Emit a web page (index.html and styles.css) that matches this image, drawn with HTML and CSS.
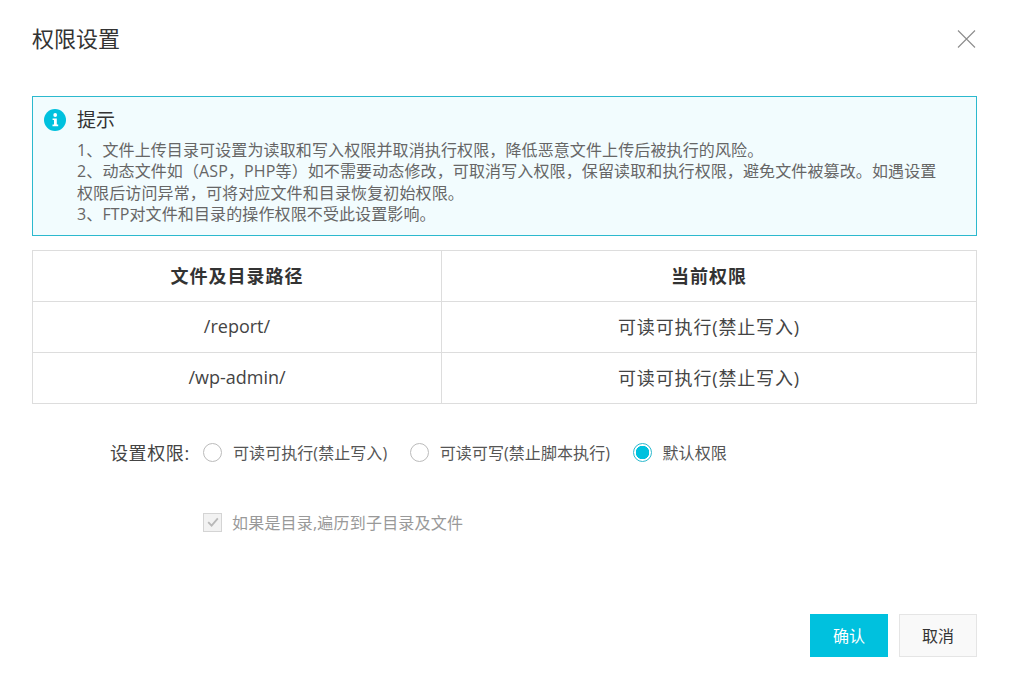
FILE: index.html
```html
<!DOCTYPE html>
<html lang="zh-CN">
<head>
<meta charset="utf-8">
<title>权限设置</title>
<link rel="stylesheet" href="styles.css">
</head>
<body>
<div class="dialog">
  <header class="dialog-head">
    <h1 class="dialog-title">权限设置</h1>
    <svg class="close-icon" width="20" height="20" viewBox="0 0 20 20"><path d="M1 1.5 18 18.5M18 1.5 1 18.5" fill="none" stroke="#8c8c8c" stroke-width="1.1"/></svg>
  </header>
  <section class="alert">
    <div class="alert-head">
      <svg class="info-icon" width="22" height="22" viewBox="0 0 22 22"><circle cx="11" cy="11" r="11" fill="#00c1de"/><circle cx="11.2" cy="6" r="1.9" fill="#fff"/><path d="M8.6 9.4h4.2v6.2h1.4v1.7H8.5v-1.7h1.5v-4.5H8.6z" fill="#fff"/></svg>
      <span class="alert-title">提示</span>
    </div>
    <div class="alert-body">
      <p>1、文件上传目录可设置为读取和写入权限并取消执行权限，降低恶意文件上传后被执行的风险。</p>
      <p>2、动态文件如（ASP，PHP等）如不需要动态修改，可取消写入权限，保留读取和执行权限，避免文件被篡改。如遇设置权限后访问异常，可将对应文件和目录恢复初始权限。</p>
      <p>3、FTP对文件和目录的操作权限不受此设置影响。</p>
    </div>
  </section>
  <table class="perm-table">
    <thead>
      <tr><th class="col-path">文件及目录路径</th><th>当前权限</th></tr>
    </thead>
    <tbody>
      <tr><td>/report/</td><td class="cell-cjk">可读可执行(禁止写入)</td></tr>
      <tr><td>/wp-admin/</td><td class="cell-cjk">可读可执行(禁止写入)</td></tr>
    </tbody>
  </table>
  <div class="radio-row">
    <span class="radio-label">设置权限:</span>
    <span class="radio"></span><span class="radio-text">可读可执行(禁止写入)</span>
    <span class="radio"></span><span class="radio-text">可读可写(禁止脚本执行)</span>
    <span class="radio radio-on"></span><span class="radio-text">默认权限</span>
  </div>
  <div class="check-row">
    <span class="check">
      <svg width="14" height="14" viewBox="0 0 14 14"><path d="M2.2 7.2 5.6 10.6 11.8 3.4" fill="none" stroke="#b8b8b8" stroke-width="1.8"/></svg>
    </span>
    <span class="check-text">如果是目录,遍历到子目录及文件</span>
  </div>
  <footer class="dialog-foot">
    <button class="btn btn-primary" type="button">确认</button>
    <button class="btn" type="button">取消</button>
  </footer>
</div>
</body>
</html>
```
FILE: styles.css
```css
* { box-sizing: border-box; }
html, body { margin: 0; padding: 0; background: #fff; }
body {
  font-family: "Open Sans", "Noto Sans CJK SC", sans-serif;
  color: #333;
  width: 1011px;
  height: 679px;
  overflow: hidden;
  text-spacing-trim: space-all;
}
.dialog { padding: 0 34px 0 32px; }
.dialog-head {
  height: 96px;
  display: flex;
  justify-content: space-between;
  align-items: flex-start;
  padding-top: 22px;
}
.dialog-title { margin: 0; font-size: 22px; line-height: 32px; font-weight: 400; color: #333; }
.close-icon { margin-top: 7px; display: block; }
.alert {
  height: 140px;
  border: 1px solid #2cb9ce;
  background: #f2fcfe;
  padding: 10px 38px 0 11px;
}
.alert-head { display: flex; align-items: center; height: 26px; gap: 11px; }
.info-icon { display: block; flex: none; }
.alert-title { font-size: 19px; line-height: 26px; color: #333; }
.alert-body { margin-top: 7px; padding-left: 33px; font-size: 16px; line-height: 21.34px; letter-spacing: .12px; color: #666; }
.alert-body p { margin: 0; }
.perm-table {
  margin-top: 14px;
  width: 945px;
  border-collapse: collapse;
  table-layout: fixed;
  font-size: 18px;
}
.perm-table th, .perm-table td {
  height: 51px;
  border: 1px solid #ddd;
  text-align: center;
  padding: 0 0 2px;
  color: #333;
}
.perm-table td { font-weight: 400; color: #444; }
.perm-table th { font-weight: 700; letter-spacing: 1px; }
.perm-table .cell-cjk { letter-spacing: .85px; }
.col-path { width: 409px; }
.radio-row {
  margin-top: 34px;
  height: 28px;
  padding-left: 78px;
  display: flex;
  align-items: center;
  font-size: 16px;
  color: #555;
}
.radio-label { font-size: 18px; color: #444; width: 93px; letter-spacing: .6px; }
.radio {
  width: 19px; height: 19px;
  border: 1px solid #bbb;
  border-radius: 50%;
  flex: none;
  background: #fff;
}
.radio-on {
  border-color: #2cb9ce;
  background: radial-gradient(circle, #00c1de 0 6.5px, #fff 7px);
}
.radio-text { margin-left: 11px; margin-right: 22.5px; letter-spacing: .07px; }
.check-row {
  margin-top: 42px;
  height: 28px;
  padding-left: 171px;
  display: flex;
  align-items: center;
  gap: 10px;
  font-size: 16px;
  color: #999;
}
.check-text { letter-spacing: .2px; }
.check {
  width: 19px; height: 19px;
  border: 1px solid #d4d4d4;
  background: #f2f2f2;
  display: flex;
  align-items: center;
  justify-content: center;
  flex: none;
}
.dialog-foot {
  margin-top: 78px;
  display: flex;
  justify-content: flex-end;
  gap: 11px;
}
.btn {
  width: 78px; height: 43px;
  border: 1px solid #e5e5e5;
  background: #f9f9f9;
  color: #333;
  font: 400 16px "Open Sans", "Noto Sans CJK SC", sans-serif;
  padding: 0 0 2px;
}
.btn-primary { background: #00c1de; border-color: #00c1de; color: #fff; }
```
